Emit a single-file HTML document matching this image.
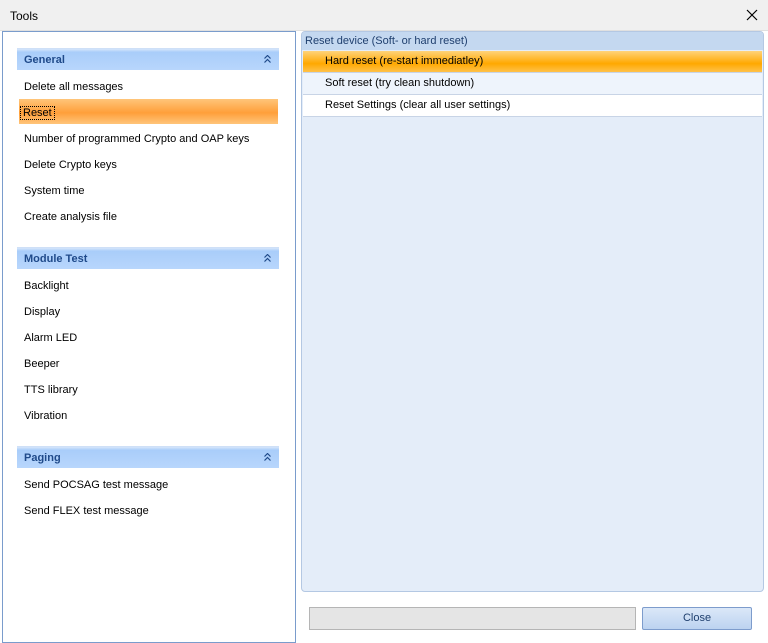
<!DOCTYPE html><html><head><style>
body{margin:0;width:768px;height:643px;background:#fff;font-family:"Liberation Sans",sans-serif;font-size:11px;position:relative;overflow:hidden;color:#000}
div{position:absolute;box-sizing:border-box}
.t{background:#f0f0f0;left:0;top:0;width:768px;height:31px;border-bottom:1px solid #e0e0e0}
.left{left:2px;top:31px;width:294px;height:612px;border:1px solid #7a9ccc;background:#fff}
.gh{left:14px;width:262px;height:22px;background:linear-gradient(#d6e6fb,#a9cdfa 15%,#b8d6fc);border-top:1px solid #cfe0f7;color:#1f4a8a;font-weight:bold;padding:5px 0 0 7px}
.gh svg{position:absolute;right:8px;top:6px}
.it{left:21px;font-size:11px}
.sel{left:16px;width:259px;height:25px;background:linear-gradient(#ffc57a,#ff9f3a 55%,#ffc57a)}
.rp{left:301px;top:31px;width:463px;height:561px;background:#e4edf9;border:1px solid #b4c8e3;border-radius:4px}
.row{left:1px;width:459px;height:22px;padding:4px 0 0 22px;border-bottom:1px solid #c8d4e6}
</style></head><body>
<div class="t"><span style="position:absolute;left:10px;top:9px;font-size:12px">Tools</span>
<svg style="position:absolute;left:746px;top:9px" width="12" height="12"><path d="M1 1L11 11M11 1L1 11" stroke="#000" stroke-width="1.2"/></svg></div>
<div class="left">
<div class="gh" style="top:16px">General<svg width="7" height="8"><path d="M0.5 3.5L3.5 0.5L6.5 3.5M0.5 7.5L3.5 4.5L6.5 7.5" stroke="#1f4a8a" fill="none" stroke-width="1.2"/></svg></div>
<div class="it" style="top:49px">Delete all messages</div>
<div class="sel" style="top:67px"></div>
<div class="it" style="top:75px;outline:1px dotted #000;left:18px;padding:0 2px">Reset</div>
<div class="it" style="top:101px">Number of programmed Crypto and OAP keys</div>
<div class="it" style="top:127px">Delete Crypto keys</div>
<div class="it" style="top:153px">System time</div>
<div class="it" style="top:179px">Create analysis file</div>
<div class="gh" style="top:215px">Module Test<svg width="7" height="8"><path d="M0.5 3.5L3.5 0.5L6.5 3.5M0.5 7.5L3.5 4.5L6.5 7.5" stroke="#1f4a8a" fill="none" stroke-width="1.2"/></svg></div>
<div class="it" style="top:248px">Backlight</div>
<div class="it" style="top:274px">Display</div>
<div class="it" style="top:300px">Alarm LED</div>
<div class="it" style="top:326px">Beeper</div>
<div class="it" style="top:352px">TTS library</div>
<div class="it" style="top:378px">Vibration</div>
<div class="gh" style="top:414px">Paging<svg width="7" height="8"><path d="M0.5 3.5L3.5 0.5L6.5 3.5M0.5 7.5L3.5 4.5L6.5 7.5" stroke="#1f4a8a" fill="none" stroke-width="1.2"/></svg></div>
<div class="it" style="top:447px">Send POCSAG test message</div>
<div class="it" style="top:473px">Send FLEX test message</div>
</div>
<div class="rp">
<div style="left:0;top:0;width:461px;height:18px;background:#c4d8f0;color:#1f3f6e;padding:3px 0 0 3px;border-radius:3px 3px 0 0">Reset device (Soft- or hard reset)</div>
<div class="row" style="top:19px;background:linear-gradient(#ffd37a,#ffa800 60%,#ffc24a)">Hard reset (re-start immediatley)</div>
<div class="row" style="top:41px;background:#eef4fc">Soft reset (try clean shutdown)</div>
<div class="row" style="top:63px;background:#fff">Reset Settings (clear all user settings)</div>
</div>
<div style="left:309px;top:607px;width:327px;height:23px;background:#e5e5e5;border:1px solid #b5b5b5"></div>
<div style="left:642px;top:607px;width:110px;height:23px;background:linear-gradient(#dbe8f8,#bcd3f0);border:1px solid #7d9ccc;border-radius:2px;text-align:center;padding-top:4px;color:#1f3f6e">Close</div>
</body></html>
